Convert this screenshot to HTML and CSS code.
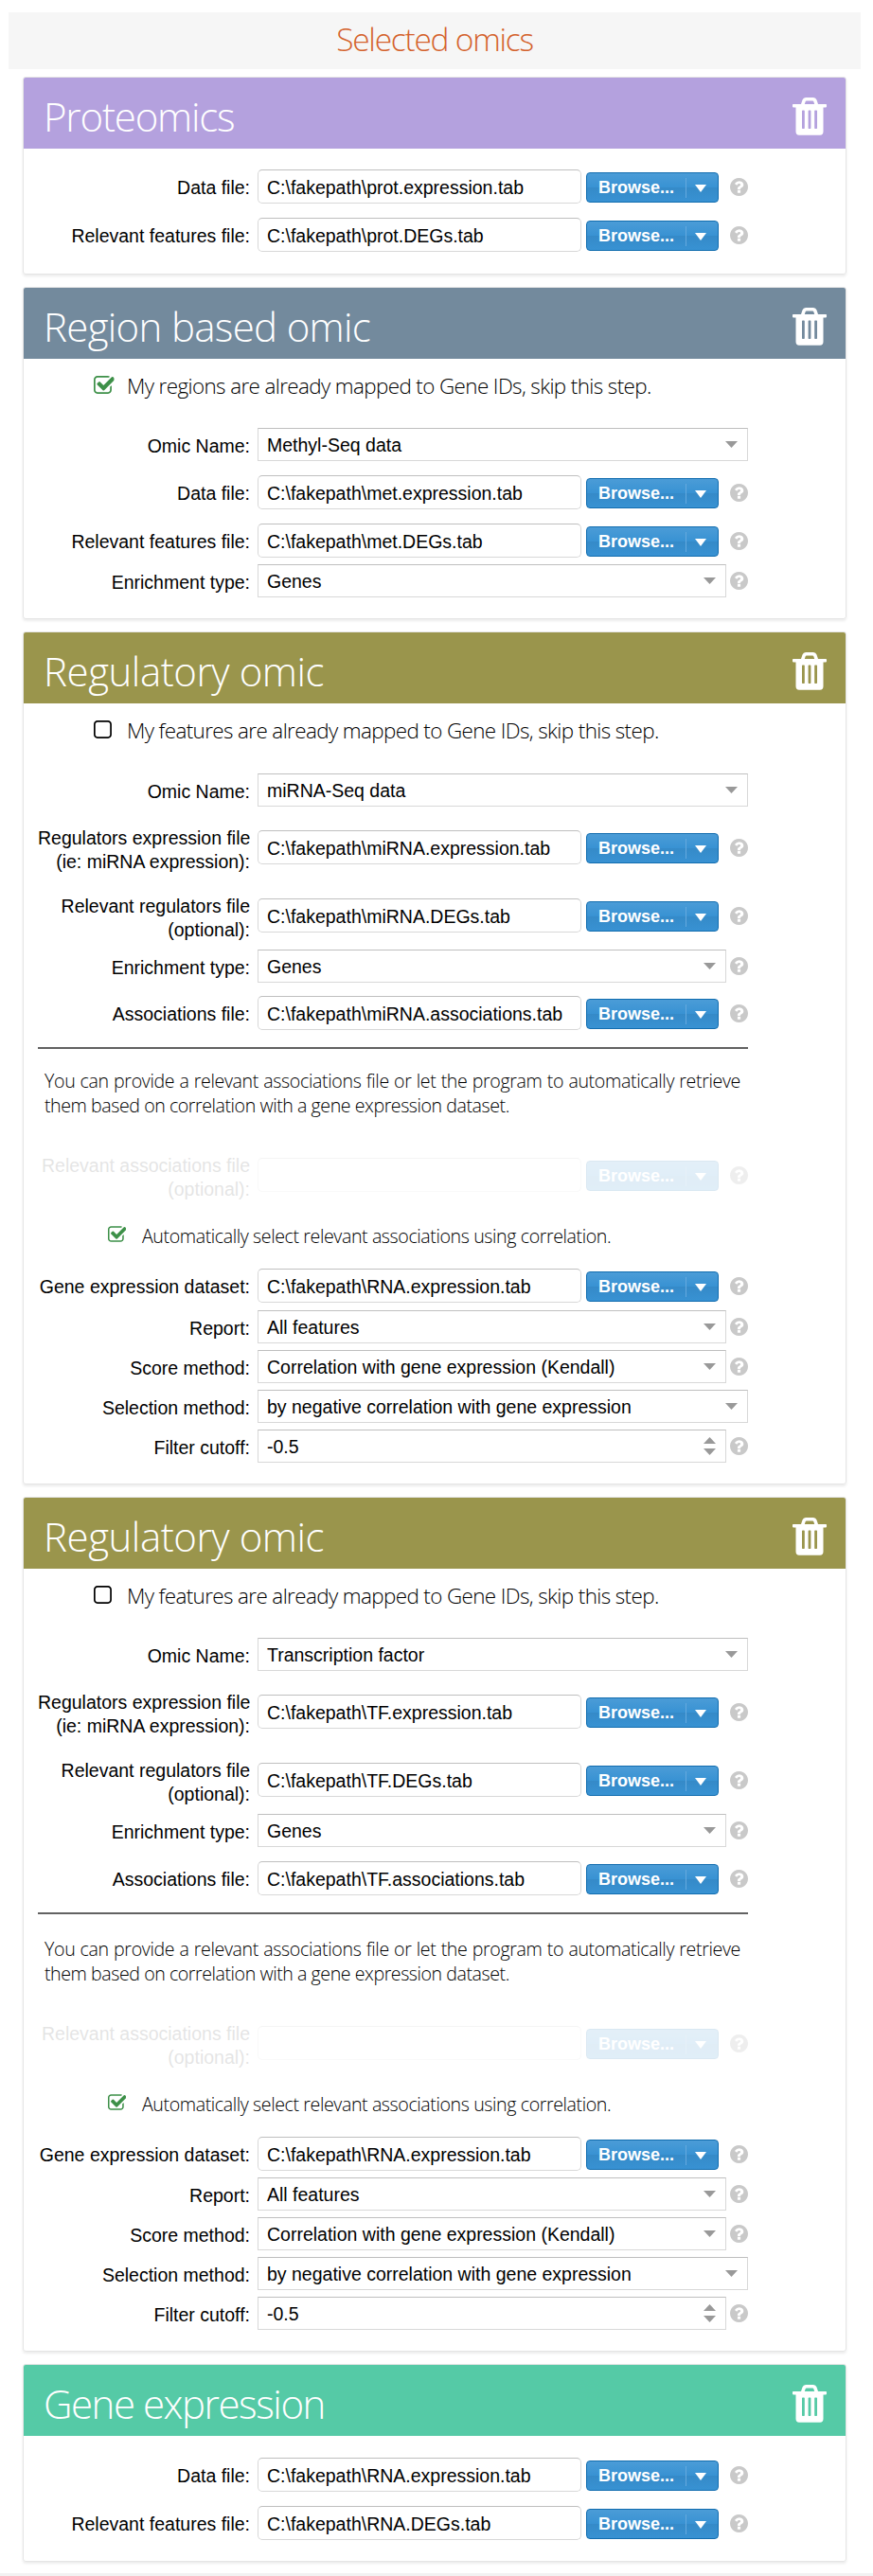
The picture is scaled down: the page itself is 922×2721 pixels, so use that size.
FILE: index.html
```html
<!DOCTYPE html>
<html lang="en">
<head>
<meta charset="utf-8">
<title>Selected omics</title>
<link rel="stylesheet" href="styles.css">
</head>
<body>
<svg class="sprite" aria-hidden="true">
  <symbol id="trash" viewBox="0 0 36 40"><path fill-rule="evenodd" d="M9 7L10.5 2.6Q11.4 0 14 0H22Q24.600 0 25.500 2.600L27 7H35.200Q36 7 36 7.800V9.600Q36 10.400 35.200 10.400H32.500V36Q32.500 39.700 29 39.700H7Q3.500 39.700 3.500 36V10.400H.8Q0 10.400 0 9.600V7.800Q0 7 .8 7ZM12.800 7H23.200L22.300 4.300Q22 3.500 21.200 3.500H14.800Q14 3.500 13.700 4.300ZM10 14.200V32.300Q10 33 10.700 33H12.100Q12.800 33 12.800 32.300V14.200Q12.800 13.500 12.100 13.500H10.700Q10 13.500 10 14.200ZM16.600 14.200V32.300Q16.600 33 17.300 33H18.700Q19.400 33 19.400 32.300V14.200Q19.400 13.500 18.700 13.500H17.300Q16.600 13.500 16.600 14.200ZM23.200 14.200V32.300Q23.200 33 23.900 33H25.300Q26 33 26 32.300V14.200Q26 13.500 25.300 13.500H23.900Q23.200 13.500 23.200 14.200Z"/></symbol>
  <symbol id="help" viewBox="128 128 1536 1536"><path d="M1024 1376v-192q0-14-9-23t-23-9h-192q-14 0-23 9t-9 23v192q0 14 9 23t23 9h192q14 0 23-9t9-23zm256-672q0-88-55.500-163t-138.500-116-170-41q-243 0-371 213-15 24 8 42l132 100q7 6 19 6 16 0 25-12 53-68 86-92 34-24 86-24 48 0 85.500 26t37.500 59q0 38-20 61t-68 45q-63 28-115.500 86.500t-52.500 125.500v36q0 14 9 23t23 9h192q14 0 23-9t9-23q0-19 21.500-49.500t54.500-49.500q32-18 49-28.500t46-35 44.500-48 28-60.500 12.500-81zm384 192q0 209-103 385.500t-279.500 279.500-385.500 103-385.500-103-279.500-279.500-103-385.500 103-385.500 279.500-279.500 385.500-103 385.500 103 279.500 279.500 103 385.500z"/></symbol>
  <symbol id="checked" viewBox="192 128 1600 1408"><path transform="translate(128 0)" d="M1472 930v318q0 119-84.500 203.500t-203.500 84.500h-832q-119 0-203.500-84.500t-84.500-203.500v-832q0-119 84.500-203.500t203.500-84.500h832q63 0 117 25 15 7 18 23 3 17-9 29l-49 49q-10 10-23 10-3 0-9-2-23-6-45-6h-832q-66 0-113 47t-47 113v832q0 66 47 113t113 47h832q66 0 113-47t47-113v-254q0-13 9-22l64-64q10-10 23-10 6 0 12 3 20 8 20 29zm231-489l-814 814q-24 24-57 24t-57-24l-430-430q-24-24-24-57t24-57l110-110q24-24 57-24t57 24l263 263 647-647q24-24 57-24t57 24l110 110q24 24 24 57t-24 57z"/></symbol>
  <symbol id="unchecked" viewBox="192 128 1600 1408"><path d="M1312 256h-832q-66 0-113 47t-47 113v832q0 66 47 113t113 47h832q66 0 113-47t47-113v-832q0-66-47-113t-113-47zm288 160v832q0 119-84.500 203.500t-203.500 84.500h-832q-119 0-203.500-84.500t-84.500-203.500v-832q0-119 84.500-203.500t203.500-84.500h832q119 0 203.500 84.500t84.500 203.500z"/></symbol>
</svg>

<main class="page">
<h1 class="banner">Selected omics</h1>

<section class="card">
  <header class="head purple"><h2 class="t-prot">Proteomics</h2><svg class="trash"><use href="#trash"/></svg></header>
  <div class="row s22"><label>Data file:</label><span class="file">C:\fakepath\prot.expression.tab</span><button class="browse"><span>Browse...</span><i></i></button><svg class="help"><use href="#help"/></svg></div>
  <div class="row s15"><label>Relevant features file:</label><span class="file">C:\fakepath\prot.DEGs.tab</span><button class="browse"><span>Browse...</span><i></i></button><svg class="help"><use href="#help"/></svg></div>
</section>

<section class="card end22">
  <header class="head slate"><h2 class="t-region">Region based omic</h2><svg class="trash"><use href="#trash"/></svg></header>
  <div class="skip"><svg class="check green"><use href="#checked"/></svg><span>My regions are already mapped to Gene IDs, skip this step.</span></div>
  <div class="row select"><label>Omic Name:</label><span class="combo wide">Methyl-Seq data<i></i></span></div>
  <div class="row s15"><label>Data file:</label><span class="file">C:\fakepath\met.expression.tab</span><button class="browse"><span>Browse...</span><i></i></button><svg class="help"><use href="#help"/></svg></div>
  <div class="row s15"><label>Relevant features file:</label><span class="file">C:\fakepath\met.DEGs.tab</span><button class="browse"><span>Browse...</span><i></i></button><svg class="help"><use href="#help"/></svg></div>
  <div class="row select s7"><label>Enrichment type:</label><span class="combo">Genes<i></i></span><svg class="help"><use href="#help"/></svg></div>
</section>

<section class="card end22">
  <header class="head olive"><h2 class="t-reg">Regulatory omic</h2><svg class="trash"><use href="#trash"/></svg></header>
  <div class="skip tall"><svg class="check"><use href="#unchecked"/></svg><span>My features are already mapped to Gene IDs, skip this step.</span></div>
  <div class="row select"><label>Omic Name:</label><span class="combo wide">miRNA-Seq data<i></i></span></div>
  <div class="row s25"><label class="two">Regulators expression file<br>(ie: miRNA expression):</label><span class="file">C:\fakepath\miRNA.expression.tab</span><button class="browse"><span>Browse...</span><i></i></button><svg class="help"><use href="#help"/></svg></div>
  <div class="row s36"><label class="two">Relevant regulators file<br>(optional):</label><span class="file">C:\fakepath\miRNA.DEGs.tab</span><button class="browse"><span>Browse...</span><i></i></button><svg class="help"><use href="#help"/></svg></div>
  <div class="row select s18"><label>Enrichment type:</label><span class="combo">Genes<i></i></span><svg class="help"><use href="#help"/></svg></div>
  <div class="row s14"><label>Associations file:</label><span class="file">C:\fakepath\miRNA.associations.tab</span><button class="browse"><span>Browse...</span><i></i></button><svg class="help"><use href="#help"/></svg></div>
  <hr>
  <div class="note"><p class="spread">You can provide a relevant associations file or let the program to automatically retrieve</p><p class="last">them based on correlation with a gene expression dataset.</p></div>
  <div class="row off"><label class="two">Relevant associations file<br>(optional):</label><span class="file"></span><button class="browse"><span>Browse...</span><i></i></button><svg class="help"><use href="#help"/></svg></div>
  <div class="auto"><svg class="check green"><use href="#checked"/></svg><span>Automatically select relevant associations using correlation.</span></div>
  <div class="row"><label>Gene expression dataset:</label><span class="file">C:\fakepath\RNA.expression.tab</span><button class="browse"><span>Browse...</span><i></i></button><svg class="help"><use href="#help"/></svg></div>
  <div class="row select s8"><label>Report:</label><span class="combo">All features<i></i></span><svg class="help"><use href="#help"/></svg></div>
  <div class="row select s7"><label>Score method:</label><span class="combo">Correlation with gene expression (Kendall)<i></i></span><svg class="help"><use href="#help"/></svg></div>
  <div class="row select s7"><label>Selection method:</label><span class="combo wide">by negative correlation with gene expression<i></i></span></div>
  <div class="row select s7"><label>Filter cutoff:</label><span class="combo">-0.5<b class="spin"><i class="up"></i><i></i></b></span><svg class="help"><use href="#help"/></svg></div>
</section>

<section class="card end22">
  <header class="head olive"><h2 class="t-reg">Regulatory omic</h2><svg class="trash"><use href="#trash"/></svg></header>
  <div class="skip"><svg class="check"><use href="#unchecked"/></svg><span>My features are already mapped to Gene IDs, skip this step.</span></div>
  <div class="row select"><label>Omic Name:</label><span class="combo wide">Transcription factor<i></i></span></div>
  <div class="row s25"><label class="two">Regulators expression file<br>(ie: miRNA expression):</label><span class="file">C:\fakepath\TF.expression.tab</span><button class="browse"><span>Browse...</span><i></i></button><svg class="help"><use href="#help"/></svg></div>
  <div class="row s36"><label class="two">Relevant regulators file<br>(optional):</label><span class="file">C:\fakepath\TF.DEGs.tab</span><button class="browse"><span>Browse...</span><i></i></button><svg class="help"><use href="#help"/></svg></div>
  <div class="row select s18"><label>Enrichment type:</label><span class="combo">Genes<i></i></span><svg class="help"><use href="#help"/></svg></div>
  <div class="row s15"><label>Associations file:</label><span class="file">C:\fakepath\TF.associations.tab</span><button class="browse"><span>Browse...</span><i></i></button><svg class="help"><use href="#help"/></svg></div>
  <hr>
  <div class="note low"><p class="spread">You can provide a relevant associations file or let the program to automatically retrieve</p><p class="last">them based on correlation with a gene expression dataset.</p></div>
  <div class="row off"><label class="two">Relevant associations file<br>(optional):</label><span class="file"></span><button class="browse"><span>Browse...</span><i></i></button><svg class="help"><use href="#help"/></svg></div>
  <div class="auto"><svg class="check green"><use href="#checked"/></svg><span>Automatically select relevant associations using correlation.</span></div>
  <div class="row"><label>Gene expression dataset:</label><span class="file">C:\fakepath\RNA.expression.tab</span><button class="browse"><span>Browse...</span><i></i></button><svg class="help"><use href="#help"/></svg></div>
  <div class="row select s7"><label>Report:</label><span class="combo">All features<i></i></span><svg class="help"><use href="#help"/></svg></div>
  <div class="row select s7"><label>Score method:</label><span class="combo">Correlation with gene expression (Kendall)<i></i></span><svg class="help"><use href="#help"/></svg></div>
  <div class="row select s7"><label>Selection method:</label><span class="combo wide">by negative correlation with gene expression<i></i></span></div>
  <div class="row select s7"><label>Filter cutoff:</label><span class="combo">-0.5<b class="spin"><i class="up"></i><i></i></b></span><svg class="help"><use href="#help"/></svg></div>
</section>

<section class="card end22">
  <header class="head teal"><h2 class="t-gene">Gene expression</h2><svg class="trash"><use href="#trash"/></svg></header>
  <div class="row s23"><label>Data file:</label><span class="file">C:\fakepath\RNA.expression.tab</span><button class="browse"><span>Browse...</span><i></i></button><svg class="help"><use href="#help"/></svg></div>
  <div class="row s15"><label>Relevant features file:</label><span class="file">C:\fakepath\RNA.DEGs.tab</span><button class="browse"><span>Browse...</span><i></i></button><svg class="help"><use href="#help"/></svg></div>
</section>
</main>
<footer class="strip"></footer>
</body>
</html>
```
FILE: styles.css
```css
* { box-sizing: border-box; }
body { margin: 0; background: #fff; color: #000; font-family: "Liberation Sans", Arial, sans-serif; font-size: 19.5px; }
h1, h2, p { margin: 0; font-weight: 300; }
.sprite { display: none; }
svg { display: block; flex: none; fill: currentColor; }

.page { height: 2718px; padding: 13px 13px 0 9px; }
.banner { height: 60px; margin-bottom: 8px; background: #f6f6f6; color: #d4622c; text-align: center; font: 300 33.5px/57px "Open Sans", sans-serif; white-space: nowrap; letter-spacing: -1.25px; }
.strip { height: 3px; background: #f2f2f2; }

.card { width: 870px; margin: 0 0 13px 15px; padding-bottom: 23px; border: 1px solid #e5e5e5; border-radius: 3px; box-shadow: 0 2px 3px rgba(0, 0, 0, .08); }
.end22 { padding-bottom: 22px; }
.head { display: flex; justify-content: space-between; height: 75px; padding: 0 20px 0 21px; border-radius: 2px 2px 0 0; color: #fff; }
.head h2 { font: 300 42px/82px "Open Sans", sans-serif; white-space: nowrap; }
.head .t-prot { letter-spacing: -1.2px; }
.head .t-region { letter-spacing: -.68px; }
.head .t-reg { letter-spacing: -.45px; }
.head .t-gene { letter-spacing: -1.45px; }
.purple { background: #b4a1de; }
.slate { background: #738a9d; }
.olive { background: #9a954c; }
.teal { background: #55caa6; }
.trash { width: 36px; height: 40px; margin-top: 21px; }

.row { display: flex; height: 36px; padding-left: 15px; }
.row.select { height: 35px; }
.row label { flex: none; width: 224px; margin-right: 8px; padding-top: 6.5px; text-align: right; line-height: 25.5px; white-space: nowrap; }
.row label.two { margin-top: -4.5px; padding-top: 0; }
.s7 { margin-top: 7px; }
.s8 { margin-top: 8px; }
.s14 { margin-top: 14px; }
.s15 { margin-top: 15px; }
.s18 { margin-top: 18px; }
.s22 { margin-top: 22px; }
.s23 { margin-top: 23px; }
.s25 { margin-top: 25px; }
.s36 { margin-top: 36px; }

.file, .combo { flex: none; border: 1px solid #d8d8d8; border-top-color: #bfbfbf; padding: 0 0 0 9px; line-height: 36px; white-space: nowrap; }
.file { width: 342px; height: 36px; border-radius: 5px; }
.combo { display: flex; justify-content: space-between; align-items: center; width: 495px; height: 35px; padding-right: 10px; }
.combo.wide { width: 518px; }
.combo i { width: 13px; height: 7px; background: #999; clip-path: polygon(0 0, 100% 0, 50% 100%); }
.spin { display: flex; flex-direction: column; gap: 5px; }
.combo i.up { clip-path: polygon(50% 0, 100% 100%, 0 100%); }

.browse { display: flex; align-items: center; flex: none; width: 140px; height: 32px; margin: 3px 12px 0 5px; padding: 0 0 0 12px; border: 1px solid #126daf; border-radius: 4px; background: linear-gradient(#4b9cd7, #3892d3 50%, #358ac8 51%, #3892d3); color: #fff; font: bold 18px/30px "Liberation Sans", Arial, sans-serif; }
.browse span { width: 93px; text-align: left; border-right: 1px solid #65a9de; line-height: 21px; }
.browse i { width: 12px; height: 8px; margin: 2px 0 0 9px; background: #fff; clip-path: polygon(0 0, 100% 0, 50% 100%); }
.help { width: 19px; height: 19px; margin-top: 9px; color: #c9c9c9; }
.select .help { margin: 8px 0 0 4px; }

.skip { display: flex; height: 73px; padding: 18px 0 0 74px; font: 300 22.4px/22px "Open Sans", sans-serif; letter-spacing: -.6px; white-space: nowrap; }
.skip.tall { height: 74px; }
.skip .check { width: 21.5px; height: 19px; margin-right: 13.5px; }
.check.green { color: #3d9048; }

hr { width: 750px; height: 2px; margin: 18px 0 0 15px; border: 0; background: #626262; }
.note { width: 735px; margin: 21px 0 42px 22px; font: 300 19.6px/26px "Open Sans", sans-serif; white-space: nowrap; }
.note.low { margin-top: 24px; }
.spread { letter-spacing: -.35px; text-align-last: justify; }
.last { letter-spacing: -.44px; }
.off label { opacity: .1; }
.off .file, .off .browse { opacity: .15; }
.off .help { opacity: .3; }
.auto { display: flex; height: 81px; padding: 36px 0 0 89px; font: 300 19.6px/21px "Open Sans", sans-serif; letter-spacing: -.4px; white-space: nowrap; }
.auto .check { width: 19px; height: 17px; margin-right: 17px; }
```
